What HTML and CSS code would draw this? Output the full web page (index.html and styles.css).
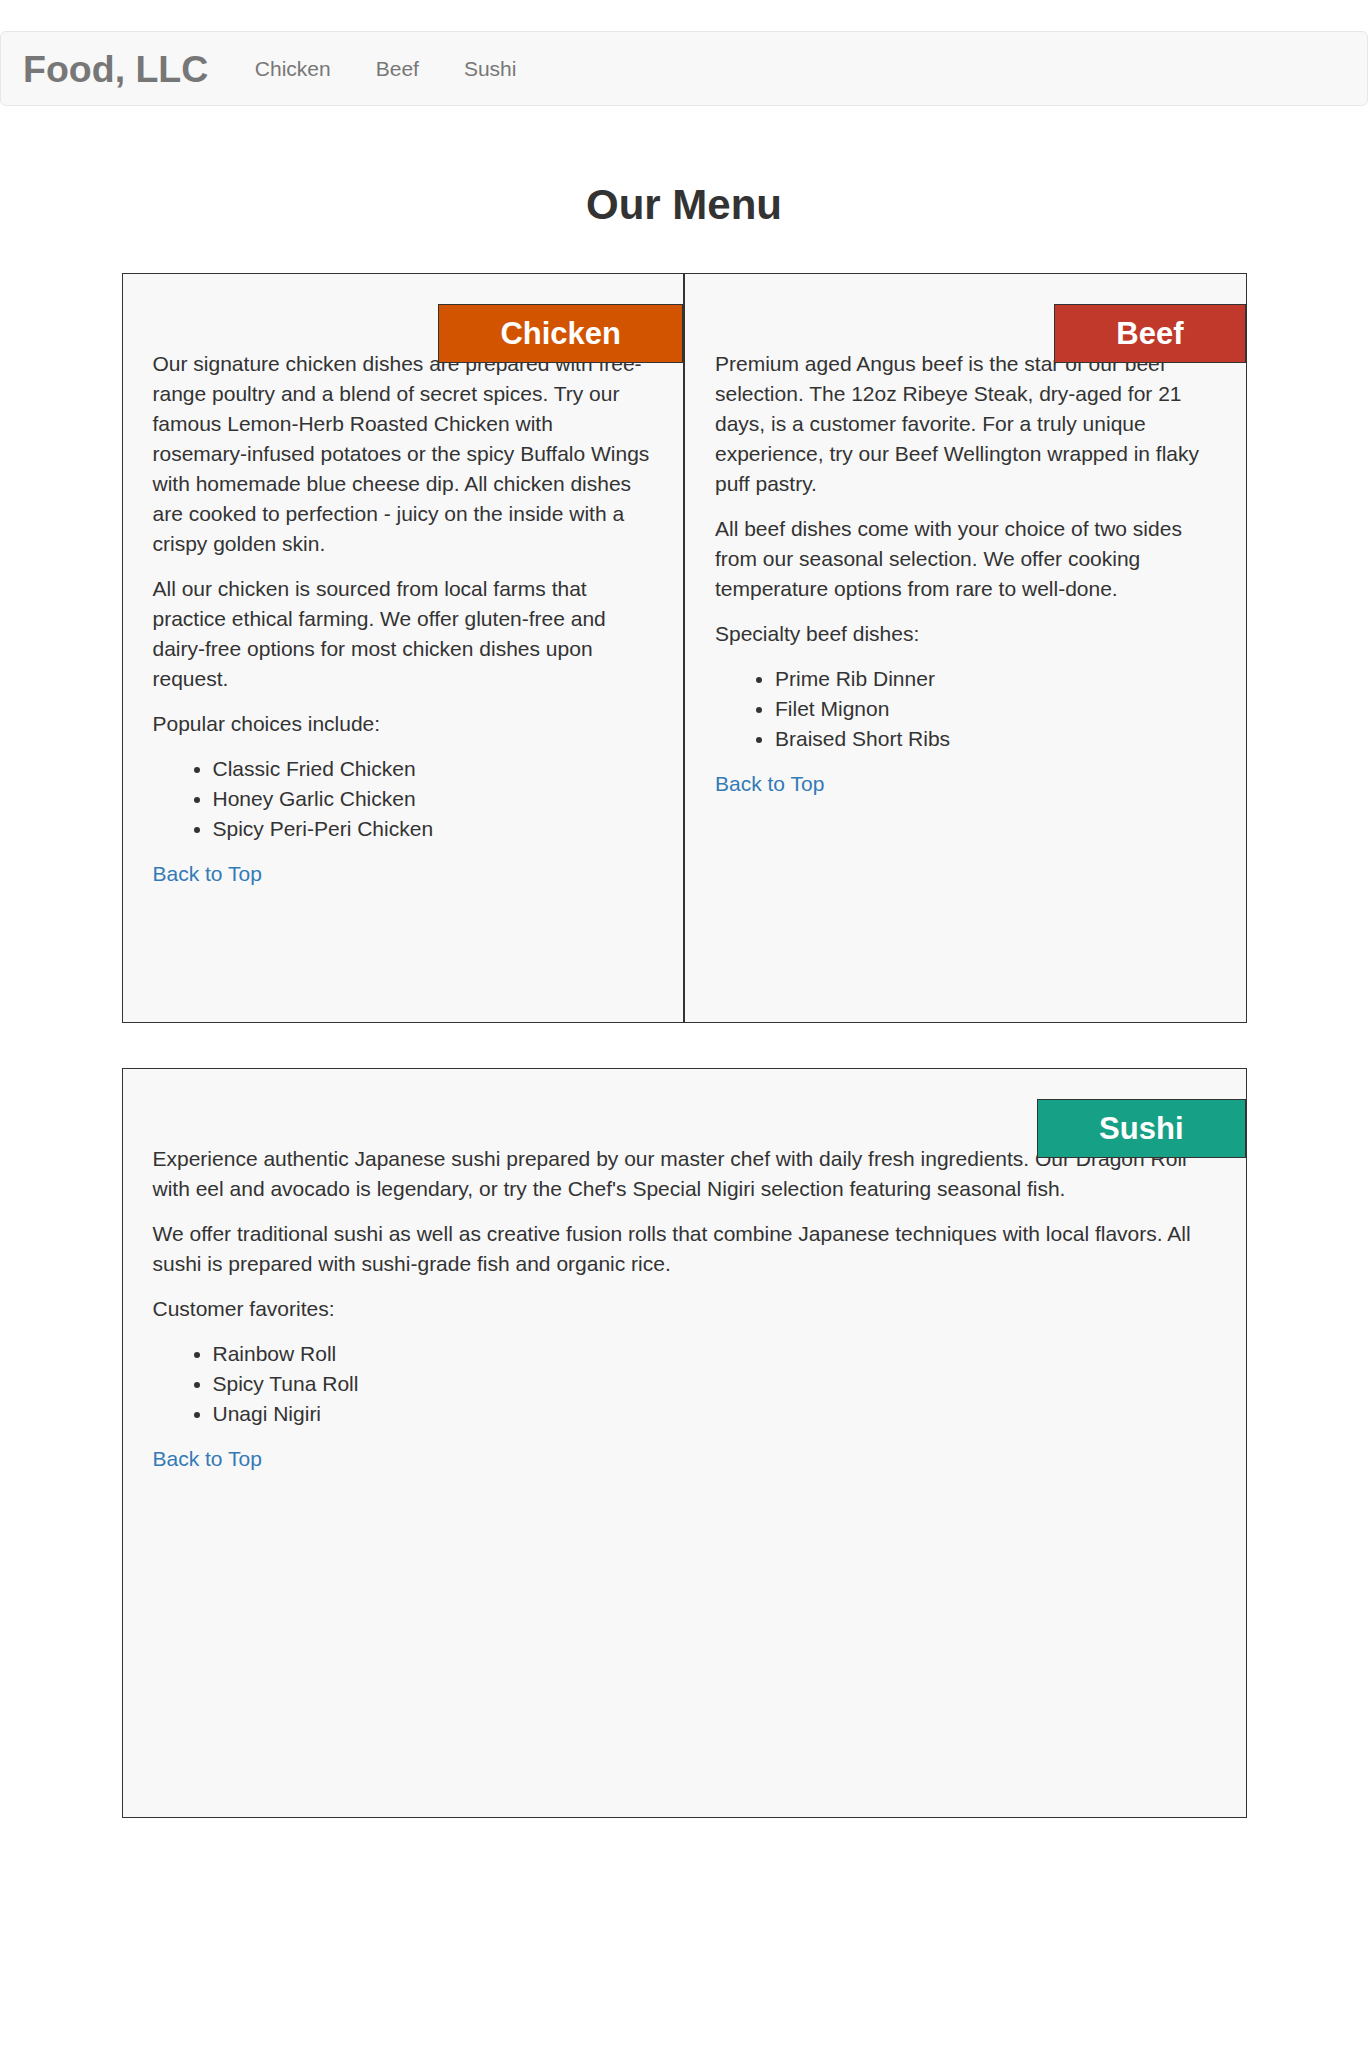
FILE: index.html
```html
<!DOCTYPE html>
<html lang="en">
<head>
<meta charset="utf-8">
<title>Food, LLC</title>
<link rel="stylesheet" href="styles.css">
</head>
<body>
<nav class="navbar">
  <a class="brand" href="#">Food, LLC</a>
  <ul class="nav-links">
    <li><a href="#chicken">Chicken</a></li>
    <li><a href="#beef">Beef</a></li>
    <li><a href="#sushi">Sushi</a></li>
  </ul>
</nav>
<main class="container">
  <h1 class="title">Our Menu</h1>
  <div class="row">
    <section class="menu-box" id="chicken">
      <h2 class="tag tag-chicken">Chicken</h2>
      <p>Our signature chicken dishes are prepared with free-range poultry and a blend of secret spices. Try our famous Lemon-Herb Roasted Chicken with rosemary-infused potatoes or the spicy Buffalo Wings with homemade blue cheese dip. All chicken dishes are cooked to perfection - juicy on the inside with a crispy golden skin.</p>
      <p>All our chicken is sourced from local farms that practice ethical farming. We offer gluten-free and dairy-free options for most chicken dishes upon request.</p>
      <p>Popular choices include:</p>
      <ul>
        <li>Classic Fried Chicken</li>
        <li>Honey Garlic Chicken</li>
        <li>Spicy Peri-Peri Chicken</li>
      </ul>
      <a class="top-link" href="#">Back to Top</a>
    </section>
    <section class="menu-box" id="beef">
      <h2 class="tag tag-beef">Beef</h2>
      <p>Premium aged Angus beef is the star of our beef selection. The 12oz Ribeye Steak, dry-aged for 21 days, is a customer favorite. For a truly unique experience, try our Beef Wellington wrapped in flaky puff pastry.</p>
      <p>All beef dishes come with your choice of two sides from our seasonal selection. We offer cooking temperature options from rare to well-done.</p>
      <p>Specialty beef dishes:</p>
      <ul>
        <li>Prime Rib Dinner</li>
        <li>Filet Mignon</li>
        <li>Braised Short Ribs</li>
      </ul>
      <a class="top-link" href="#">Back to Top</a>
    </section>
  </div>
  <section class="menu-box wide" id="sushi">
    <h2 class="tag tag-sushi">Sushi</h2>
    <p>Experience authentic Japanese sushi prepared by our master chef with daily fresh ingredients. Our Dragon Roll with eel and avocado is legendary, or try the Chef's Special Nigiri selection featuring seasonal fish.</p>
    <p>We offer traditional sushi as well as creative fusion rolls that combine Japanese techniques with local flavors. All sushi is prepared with sushi-grade fish and organic rice.</p>
    <p>Customer favorites:</p>
    <ul>
      <li>Rainbow Roll</li>
      <li>Spicy Tuna Roll</li>
      <li>Unagi Nigiri</li>
    </ul>
    <a class="top-link" href="#">Back to Top</a>
  </section>
</main>
</body>
</html>
```
FILE: styles.css
```css
* { box-sizing: border-box; }

html, body {
  margin: 0;
  padding: 0;
  background: #fff;
}

body {
  font-family: "Liberation Sans", Arial, sans-serif;
  font-size: 21px;
  line-height: 30px;
  color: #333;
  padding-top: 31px;
}

a { text-decoration: none; }

.navbar {
  display: flex;
  align-items: center;
  height: 75px;
  padding-left: 22px;
  background: #f8f8f8;
  border: 1px solid #e7e7e7;
  border-radius: 6px;
}

.brand {
  font-size: 37.5px;
  font-weight: bold;
  line-height: 30px;
  color: #777;
  padding-right: 24px;
}

.nav-links {
  display: flex;
  list-style: none;
  margin: 0;
  padding: 0;
}

.nav-links a {
  display: block;
  padding: 0 22.5px;
  color: #777;
  font-size: 21px;
  line-height: 30px;
}

.container {
  width: 1125px;
  margin: 0 auto;
}

.title {
  margin: 76px 0 45px;
  font-size: 42px;
  line-height: 1.1;
  font-weight: bold;
  text-align: center;
  color: #333;
}

.row {
  display: grid;
  grid-template-columns: 1fr 1fr;
  margin-bottom: 45px;
}

.menu-box {
  position: relative;
  height: 750px;
  padding: 75px 30px 0;
  background: #f8f8f8;
  border: 1px solid #333;
}

.menu-box p {
  margin: 0 0 15px;
}

.menu-box ul {
  margin: 0 0 15px;
  padding-left: 60px;
}

.tag {
  position: absolute;
  top: 30px;
  right: 0;
  margin: 0;
  padding: 12px 61px;
  font-size: 31px;
  line-height: 33px;
  font-weight: bold;
  color: #fff;
  border: 1px solid #333;
}

.tag-chicken { background: #d35400; }
.tag-beef { background: #c0392b; }
.tag-sushi { background: #16a085; }

.top-link {
  color: #337ab7;
}
```
